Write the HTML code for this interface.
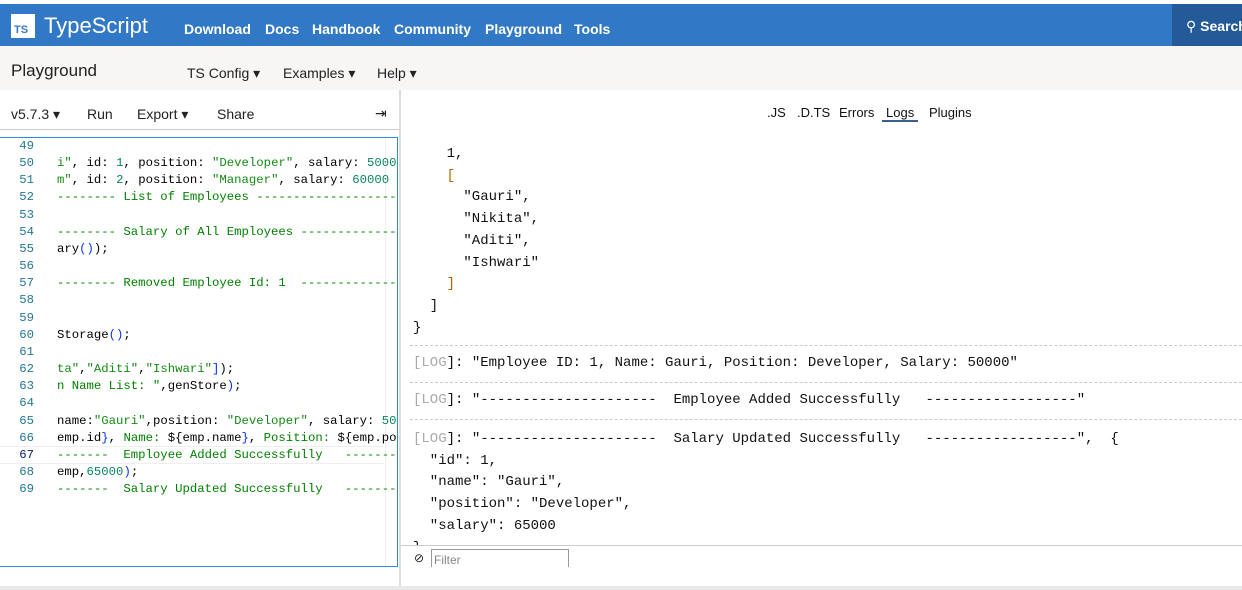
<!DOCTYPE html>
<html><head><meta charset="utf-8"><style>
*{margin:0;padding:0;box-sizing:border-box}
body{width:1242px;height:590px;overflow:hidden;background:#fff;font-family:"Liberation Sans",sans-serif;position:relative}
.abs{position:absolute}
#top{left:0;top:4px;width:1242px;height:42px;background:#3178c6}
#logo{left:11px;top:14px;width:24px;height:24px;background:#fff;color:#3178c6;font-weight:bold;font-size:11px;padding:11px 0 0 3px;line-height:11px}
.nav{color:#fff;font-weight:bold;font-size:14px;top:21px}
#search{left:1172px;top:4px;width:70px;height:42px;background:#235a97;color:#fff;font-weight:bold;font-size:14px;padding:14px 0 0 14px;white-space:nowrap;overflow:hidden}
#sub{left:0;top:46px;width:1242px;height:44px;background:#f7f6f5}
.sm{font-size:14px;color:#222}
.code{font-family:"Liberation Mono",monospace;font-size:12.3px;white-space:pre;line-height:17.15px}
.out{font-family:"Liberation Mono",monospace;font-size:14px;white-space:pre;color:#111}
.g{color:#098658}.c{color:#008000}.s{color:#148a14}.b{color:#0431fa}.k{color:#000}
.dash{left:410px;width:832px;border-top:1px dashed #ccc;height:0}
.lg{color:#aaa}
</style></head><body>
<div class="abs" id="top"></div>
<div class="abs" id="logo">TS</div>
<div class="abs" style="left:44px;top:13px;color:#fff;font-size:22px;">TypeScript</div>
<div class="abs nav" style="left:184px">Download</div>
<div class="abs nav" style="left:265px">Docs</div>
<div class="abs nav" style="left:312px">Handbook</div>
<div class="abs nav" style="left:394px">Community</div>
<div class="abs nav" style="left:485px">Playground</div>
<div class="abs nav" style="left:574px">Tools</div>
<div class="abs" id="search"><span style="font-weight:normal">⚲</span> Search</div>
<div class="abs" id="sub"></div>
<div class="abs" style="left:11px;top:61px;font-size:17px;color:#222">Playground</div>
<div class="abs sm" style="left:187px;top:65px">TS Config ▾</div>
<div class="abs sm" style="left:283px;top:65px">Examples ▾</div>
<div class="abs sm" style="left:377px;top:65px">Help ▾</div>
<div class="abs" style="left:399px;top:90px;width:2px;height:500px;background:#ddd"></div>
<div class="abs sm" style="left:11px;top:106px">v5.7.3 ▾</div>
<div class="abs sm" style="left:87px;top:106px">Run</div>
<div class="abs sm" style="left:137px;top:106px">Export ▾</div>
<div class="abs sm" style="left:217px;top:106px">Share</div>
<div class="abs sm" style="left:375px;top:105px">⇥</div>
<div class="abs" style="left:0;top:129px;width:399px;height:1px;background:#ccc"></div>
<div class="abs" style="left:0;top:137px;width:398px;height:430px;border:1px solid #2a8fe0;border-left:none"></div>
<div class="abs" style="left:0;top:446px;width:384px;height:18px;border-top:1px solid #eee;border-bottom:1px solid #eee"></div>
<div class="abs" style="left:385px;top:138px;width:1px;height:428px;background:#eee"></div>
<div class="abs code" style="left:18px;top:138px;color:#237893;width:16px;text-align:right">49
50
51
52
53
54
55
56
57
58
59
60
61
62
63
64
65
66
<span style="color:#0b216f">67</span>
68
69</div>
<div class="abs code" style="left:57px;top:138px;width:340px;overflow:hidden;color:#000">
<span class="s">i"</span>, <span class="k">id</span>: <span class="g">1</span>, <span class="k">position</span>: <span class="s">"Developer"</span>, <span class="k">salary</span>: <span class="g">50000</span>
<span class="s">m"</span>, <span class="k">id</span>: <span class="g">2</span>, <span class="k">position</span>: <span class="s">"Manager"</span>, <span class="k">salary</span>: <span class="g">60000</span> }
<span class="c">-------- List of Employees ------------------------</span>

<span class="c">-------- Salary of All Employees ------------------</span>
ary<span class="b">()</span>);

<span class="c">-------- Removed Employee Id: 1  ------------------</span>


Storage<span class="b">()</span>;

<span class="s">ta"</span>,<span class="s">"Aditi"</span>,<span class="s">"Ishwari"</span><span class="b">]</span>);
<span class="c">n Name List: "</span>,genStore<span class="b">)</span>;

name:<span class="s">"Gauri"</span>,position: <span class="s">"Developer"</span>, salary: <span class="g">50000</span>
emp.id<span class="b">}</span>, <span class="c">Name: </span>${emp.name<span class="b">}</span>, <span class="c">Position: </span>${emp.position
<span class="c">-------  Employee Added Successfully   -----------</span>
emp,<span class="g">65000</span><span class="b">)</span>;
<span class="c">-------  Salary Updated Successfully   -----------</span></div>

<div class="abs" style="left:767px;top:105px;font-size:13px;color:#111">.JS</div>
<div class="abs" style="left:797px;top:105px;font-size:13px;color:#111">.D.TS</div>
<div class="abs" style="left:839px;top:105px;font-size:13px;color:#111">Errors</div>
<div class="abs" style="left:886px;top:105px;font-size:13px;color:#111">Logs</div>
<div class="abs" style="left:882px;top:120px;width:36px;height:2px;background:#3b5f95"></div>
<div class="abs" style="left:929px;top:105px;font-size:13px;color:#111">Plugins</div>

<div class="abs out" style="left:413px;top:144px;line-height:21.7px">    1,
    <span style="color:#a76a00">[</span>
      "Gauri",
      "Nikita",
      "Aditi",
      "Ishwari"
    <span style="color:#a76a00">]</span>
  ]
}</div>
<div class="abs dash" style="top:345px"></div>
<div class="abs out" style="left:413px;top:355px"><span class="lg">[LOG</span>]: "Employee ID: 1, Name: Gauri, Position: Developer, Salary: 50000"</div>
<div class="abs dash" style="top:382px"></div>
<div class="abs out" style="left:413px;top:392px"><span class="lg">[LOG</span>]: "---------------------  Employee Added Successfully   ------------------"</div>
<div class="abs dash" style="top:419px"></div>
<div class="abs out" style="left:413px;top:429px;line-height:21.7px"><span class="lg">[LOG</span>]: "---------------------  Salary Updated Successfully   ------------------",  {
  "id": 1,
  "name": "Gauri",
  "position": "Developer",
  "salary": 65000
}</div>
<div class="abs" style="left:401px;top:545px;width:841px;height:45px;background:#fff;border-top:1px solid #ccc"></div>
<div class="abs" style="left:414px;top:551px;font-size:12px;color:#222">⊘</div>
<div class="abs" style="left:431px;top:549px;width:138px;height:18px;border:1px solid #999;border-bottom:none;font-size:12px;color:#888;padding:3px 0 0 2px">Filter</div>
<div class="abs" style="left:0;top:586px;width:1242px;height:4px;background:#e8e8e8"></div>
</body></html>
